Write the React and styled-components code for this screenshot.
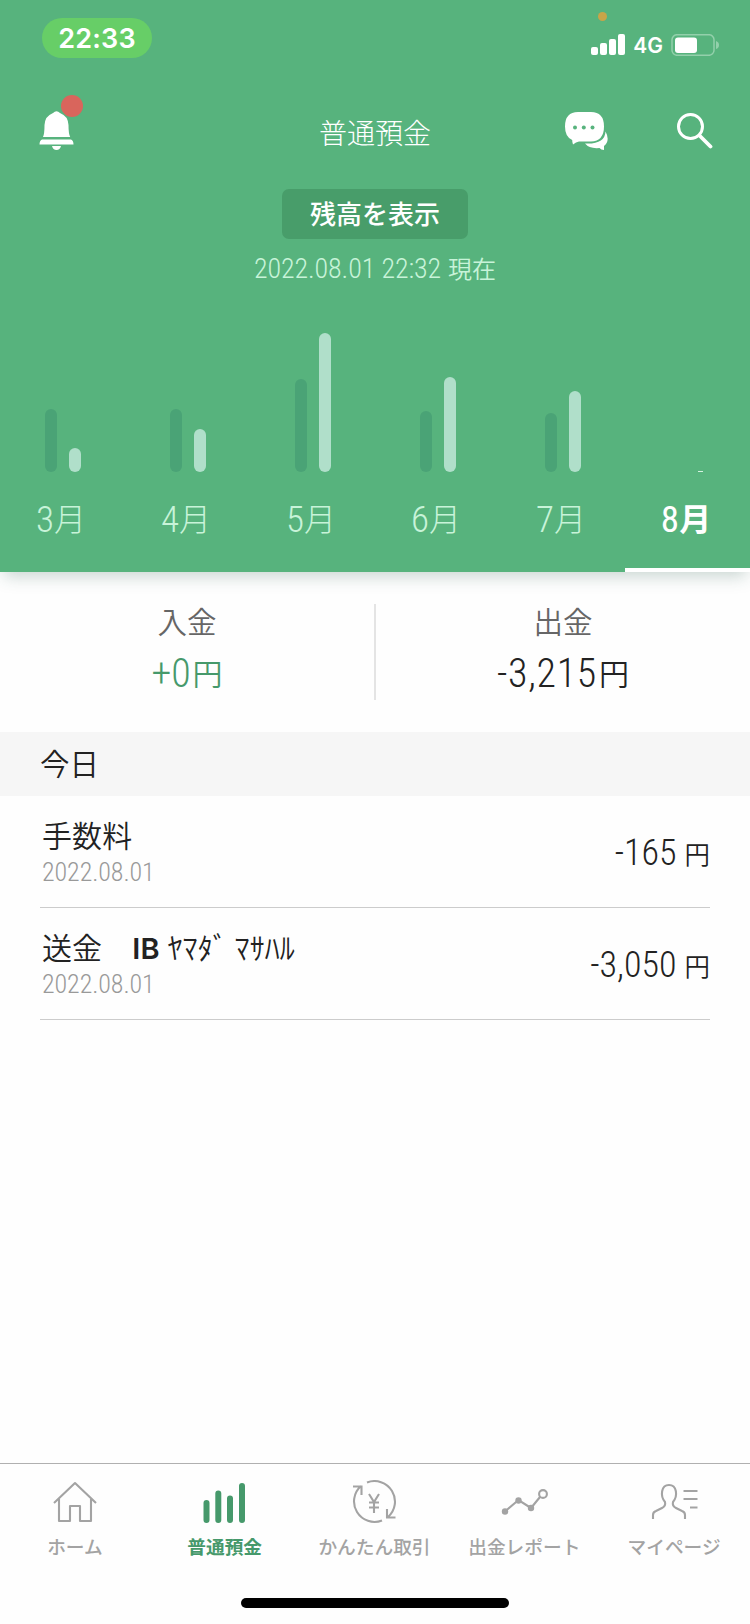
import React from "react";
import styled, { createGlobalStyle, css } from "styled-components";

const GlobalStyle = createGlobalStyle`
  * { box-sizing: border-box; }
  body {
    margin: 0;
    background: #fff;
    font-family: "Noto Sans CJK JP", sans-serif;
    font-weight: 350;
    color: #222;
  }
`;

const Screen = styled.div`
  width: 750px;
  height: 1624px;
  display: flex;
  flex-direction: column;
  background: #fefefe;
  overflow: hidden;
`;

const Hero = styled.header`
  height: 572px;
  flex: none;
  display: flex;
  flex-direction: column;
  align-items: center;
  background: #57b37d;
  color: #fff;
  box-shadow: 0 8px 16px -4px rgba(40, 90, 75, 0.26);
`;

const StatusBar = styled.div`
  width: 100%;
  height: 76px;
  padding: 0 31px 0 42px;
  display: flex;
  align-items: center;
  justify-content: space-between;
  position: relative;
`;

const Clock = styled.div`
  width: 110px;
  height: 40px;
  border-radius: 20px;
  background: #67ce67;
  font: 600 27px/41px Inter, sans-serif;
  letter-spacing: 0.2px;
  text-align: center;
`;

const Recording = styled.span`
  position: absolute;
  left: 598px;
  top: 12px;
  width: 9px;
  height: 9px;
  border-radius: 50%;
  background: #c8a548;
`;

const StatusRight = styled.div`
  display: flex;
  align-items: center;
  padding-top: 14px;
  svg { display: block; }
`;

const Network = styled.span`
  margin: 2px 8px 0 8px;
  font: 600 21px/22px Inter, sans-serif;
`;

const TitleBar = styled.div`
  width: 100%;
  height: 113px;
  display: grid;
  grid-template-columns: 1fr auto 1fr;
  padding: 18px 37px 0 39px;
`;

const Title = styled.h1`
  margin: 18px 2px 0 0;
  font-size: 28px;
  line-height: 40px;
  font-weight: 300;
`;

const Bell = styled.div`
  position: relative;
  padding-top: 17px;
`;

const Badge = styled.span`
  position: absolute;
  left: 22px;
  top: 1px;
  width: 22px;
  height: 22px;
  border-radius: 50%;
  background: #d9655c;
`;

const Actions = styled.div`
  display: flex;
  justify-content: flex-end;
  gap: 68px;
  padding-top: 18px;
`;

const BalanceButton = styled.button`
  width: 186px;
  height: 50px;
  padding: 0 0 2px;
  border: 0;
  border-radius: 7px;
  background: #489d6a;
  color: #fff;
  font: 500 26px/46px "Noto Sans CJK JP", sans-serif;
`;

const Digits = styled.span`
  display: inline-block;
  font-family: "Roboto Condensed", Roboto, sans-serif;
  font-stretch: 75%;
  font-weight: ${(p) => p.$weight || 300};
  font-size: ${(p) => p.$size}px;
  letter-spacing: ${(p) => p.$track || 0}px;
`;

const Unit = styled.span`
  margin-left: ${(p) => p.$gap}px;
  font-size: ${(p) => p.$size}px;
  vertical-align: ${(p) => p.$raise || 0}px;
`;

const AsOf = styled.div`
  height: 60px;
  padding-top: 9px;
  line-height: 40px;
  color: #c8f3d9;
  white-space: nowrap;
`;

const Chart = styled.div`
  width: 750px;
  flex: 1;
  display: grid;
  grid-template-columns: repeat(6, 1fr);
`;

const Month = styled.button`
  border: 0;
  padding: 0;
  background: none;
  display: flex;
  flex-direction: column;
  justify-content: flex-end;
  font: 300 32px/56px "Noto Sans CJK JP", sans-serif;
  color: #c8f3d9;
  border-bottom: 4px solid transparent;
  ${(p) =>
    p.$active &&
    css`
      color: #fff;
      font-weight: 700;
      border-color: #fff;
    `}
`;

const Bars = styled.div`
  display: flex;
  align-items: flex-end;
  gap: 12px;
  padding-left: 45px;
`;

const Bar = styled.i`
  width: 12px;
  border-radius: 6px;
  background: ${(p) => (p.$out ? "#b0dfca" : "#4aa376")};
  height: ${(p) => p.$h}px;
`;

const Tick = styled.i`
  width: 5px;
  height: 1px;
  margin-left: 28px;
  background: #d5f2e0;
`;

const MonthLabel = styled.div`
  height: 96px;
  width: 100%;
  padding: 17px 3px 0 0;
  text-align: center;
  line-height: 56px;
`;

const Summary = styled.section`
  height: 160px;
  flex: none;
  padding-top: 32px;
  display: grid;
  grid-template-columns: 374px 376px;
`;

const Total = styled.div`
  height: 96px;
  display: flex;
  flex-direction: column;
  align-items: center;
  border-left: ${(p) => (p.$divided ? "2px solid #e4e4e4" : "0")};
  color: ${(p) => p.$color};
`;

const TotalLabel = styled.div`
  height: 38px;
  flex: none;
  font-size: 29.5px;
  line-height: 33px;
  color: #666;
`;

const Amount = styled.div`
  padding-top: ${(p) => p.$drop || 0}px;
  line-height: 60px;
  white-space: nowrap;
`;

const DayHeading = styled.h2`
  margin: 0;
  height: 64px;
  flex: none;
  padding-left: 40px;
  background: #f6f6f6;
  font-size: 29.5px;
  font-weight: 350;
  line-height: 61px;
`;

const List = styled.ul`
  margin: 0;
  padding: 0 40px;
  list-style: none;
  flex: 1;
`;

const Row = styled.li`
  height: 112px;
  padding: 0 0 2px 2px;
  display: flex;
  align-items: center;
  justify-content: space-between;
  border-bottom: 1px solid #ccc;
`;

const Name = styled.div`
  height: 46px;
  font-size: 30px;
  line-height: 42px;
  white-space: pre;
  letter-spacing: 0.1px;
`;

const Latin = styled.b`
  margin-right: 1px;
  font: 600 29px/42px Inter, sans-serif;
`;

const DateText = styled.div`
  height: 30px;
  line-height: 26px;
  color: #999;
`;

const TabBar = styled.nav`
  height: 161px;
  flex: none;
  border-top: 1px solid #b0b0b0;
  display: flex;
  flex-direction: column;
  align-items: center;
`;

const Tabs = styled.div`
  width: 100%;
  height: 134px;
  padding-right: 1px;
  display: grid;
  grid-template-columns: repeat(5, 1fr);
`;

const Tab = styled.a`
  padding-top: 16px;
  display: flex;
  flex-direction: column;
  align-items: center;
  color: ${(p) => (p.$active ? "#46996b" : "#a3a3a3")};
  font-size: 18.7px;
  line-height: 30px;
  font-weight: ${(p) => (p.$active ? 700 : 500)};
  white-space: nowrap;
  svg { margin-bottom: 7px; }
`;

const HomeIndicator = styled.div`
  width: 268px;
  height: 10px;
  border-radius: 5px;
  background: #000;
`;

const Svg = ({ w, h, children }) => (
  <svg width={w} height={h} viewBox={`0 0 ${w} ${h}`} fill="none" stroke="currentColor" strokeWidth="2.1">
    {children}
  </svg>
);

const months = [
  { n: 3, in: 63, out: 24 },
  { n: 4, in: 63, out: 43 },
  { n: 5, in: 93, out: 139 },
  { n: 6, in: 61, out: 95 },
  { n: 7, in: 59, out: 81 },
  { n: 8, active: true },
];

const HomeIcon = () => (
  <Svg w={50} h={44}>
    <path d="M4 23 25 3l21 20M9 19v22h11V26h10v15h11V19" strokeLinejoin="round" />
  </Svg>
);

const BarsIcon = () => (
  <Svg w={50} h={44}>
    <path d="M6.500 23v17M18.300 13.500v26.500M30 18.500v21.500M42 6v34" strokeWidth="6" strokeLinecap="round" />
  </Svg>
);

const ExchangeIcon = () => (
  <Svg w={50} h={44}>
    <path d="M18 2.500A20.500 20.500 0 0 1 39 37M33 40.500A20.500 20.500 0 0 1 12 6M4 6.500H12.500V15M46.500 37.500H38V29M20 14l5 8 5-8M25 22v11M20 22.500h10M20 27.500h10" />
  </Svg>
);

const ReportIcon = () => (
  <Svg w={50} h={44}>
    <path d="M6 31.500 19.500 20 32 28 41 17" />
    <circle cx="6" cy="31.500" r="3.200" fill="currentColor" stroke="none" />
    <circle cx="19.500" cy="20.500" r="3.200" fill="currentColor" stroke="none" />
    <circle cx="32" cy="28" r="3.200" fill="currentColor" stroke="none" />
    <circle cx="44" cy="14" r="3.900" />
  </Svg>
);

const PersonIcon = () => (
  <Svg w={50} h={44}>
    <path d="M4 39v-4q0-3 3-4l6-3q4-2 3-6c-5-6-4-17 4-17s9 11 4 17q-1 4 3 6l6 3q3 1 3 4v4M34.500 11h14M34.500 19h14M41 27.500H48.500" />
  </Svg>
);

const tabs = [
  { label: "ホーム", icon: <HomeIcon /> },
  { label: "普通預金", icon: <BarsIcon />, active: true },
  { label: "かんたん取引", icon: <ExchangeIcon /> },
  { label: "出金レポート", icon: <ReportIcon /> },
  { label: "マイページ", icon: <PersonIcon /> },
];

export default function App() {
  return (
    <Screen>
      <GlobalStyle />
      <Hero>
        <StatusBar>
          <Clock>22:33</Clock>
          <Recording />
          <StatusRight>
            <svg width="34" height="22" fill="#fff">
              <rect x="0" y="13" width="7" height="8" rx="2" />
              <rect x="9" y="9" width="7" height="12" rx="2" />
              <rect x="18" y="5" width="7" height="16" rx="2" />
              <rect x="27" y="0" width="7" height="21" rx="2" />
            </svg>
            <Network>4G</Network>
            <svg width="48" height="22">
              <rect x="1" y="0.700" width="42" height="20.600" rx="5" fill="none" stroke="#93d0ab" strokeWidth="1.500" />
              <rect x="4" y="3.500" width="22" height="15.500" rx="3" fill="#fff" />
              <path d="M45 7q3 1 3 4t-3 4z" fill="#93d0ab" />
            </svg>
          </StatusRight>
        </StatusBar>
        <TitleBar>
          <Bell>
            <svg width="35" height="40" fill="#fff">
              <path d="M14 2q3.500-3.500 7 0Q29 5 29.500 14q0 9 1.700 12H4q1.500-3 1.500-12Q6 5 14 2zM3 28.500h29q2.500 1 2.500 5H.500Q.500 29.500 3 28.500zM13 35h9q-1 4-4.500 4T13 35z" />
            </svg>
            <Badge />
          </Bell>
          <Title>普通預金</Title>
          <Actions>
            <svg width="44" height="40" fill="#fff">
              <path d="M13 0h13q13 0 13 14.500T26 29.500H14q-3 .5-6 3-.800-2-.800-4.500Q0 25 0 14.500 0 0 13 0z" />
              <path d="M40.500 19.500q5 9-1.500 14.500V38q-3 0-4.500-2-10 1-14.500-4.500 20 1 20.500-12z" />
              <g fill="#57b37d">
                <circle cx="10" cy="15.500" r="2" />
                <circle cx="18.800" cy="15.500" r="2" />
                <circle cx="27.500" cy="15.500" r="2" />
              </g>
            </svg>
            <svg width="36" height="38" fill="none" stroke="#fff">
              <circle cx="13.500" cy="14.500" r="12" strokeWidth="3" />
              <path d="m22.500 23.500 11 11" strokeWidth="3.800" strokeLinecap="round" />
            </svg>
          </Actions>
        </TitleBar>
        <BalanceButton>残高を表示</BalanceButton>
        <AsOf>
          <Digits $size={28} $track={-0.1}>2022.08.01 22:32</Digits>
          <Unit $size={24} $gap={7}>現在</Unit>
        </AsOf>
        <Chart>
          {months.map((m) => (
            <Month key={m.n} $active={m.active}>
              <Bars>
                {m.active ? (
                  <Tick />
                ) : (
                  <>
                    <Bar $h={m.in} />
                    <Bar $out $h={m.out} />
                  </>
                )}
              </Bars>
              <MonthLabel>
                <Digits $size={37} $weight={m.active ? 450 : 260}>{m.n}</Digits>
                <Unit $size={32} $gap={0} $raise={1}>月</Unit>
              </MonthLabel>
            </Month>
          ))}
        </Chart>
      </Hero>
      <Summary>
        <Total $color="#46996b">
          <TotalLabel>入金</TotalLabel>
          <Amount>
            <Digits $size={40}>+0</Digits>
            <Unit $size={30} $gap={2} $raise={2}>円</Unit>
          </Amount>
        </Total>
        <Total $divided $color="#222">
          <TotalLabel>出金</TotalLabel>
          <Amount>
            <Digits $size={40} $track={0.7}>-3,215</Digits>
            <Unit $size={30} $gap={2} $raise={2}>円</Unit>
          </Amount>
        </Total>
      </Summary>
      <DayHeading>今日</DayHeading>
      <List>
        <Row>
          <div>
            <Name>手数料</Name>
            <DateText>
              <Digits $size={26} $track={-0.1}>2022.08.01</Digits>
            </DateText>
          </div>
          <Amount $drop={9}>
            <Digits $size={36}>-165</Digits>
            <Unit $size={25.5} $gap={8} $raise={1}>円</Unit>
          </Amount>
        </Row>
        <Row>
          <div>
            <Name>
              送金　<Latin>IB</Latin> ﾔﾏﾀﾞ ﾏｻﾊﾙ
            </Name>
            <DateText>
              <Digits $size={26} $track={-0.1}>2022.08.01</Digits>
            </DateText>
          </div>
          <Amount $drop={9}>
            <Digits $size={36}>-3,050</Digits>
            <Unit $size={25.5} $gap={8} $raise={1}>円</Unit>
          </Amount>
        </Row>
      </List>
      <TabBar>
        <Tabs>
          {tabs.map((t) => (
            <Tab key={t.label} $active={t.active}>
              {t.icon}
              {t.label}
            </Tab>
          ))}
        </Tabs>
        <HomeIndicator />
      </TabBar>
    </Screen>
  );
}
